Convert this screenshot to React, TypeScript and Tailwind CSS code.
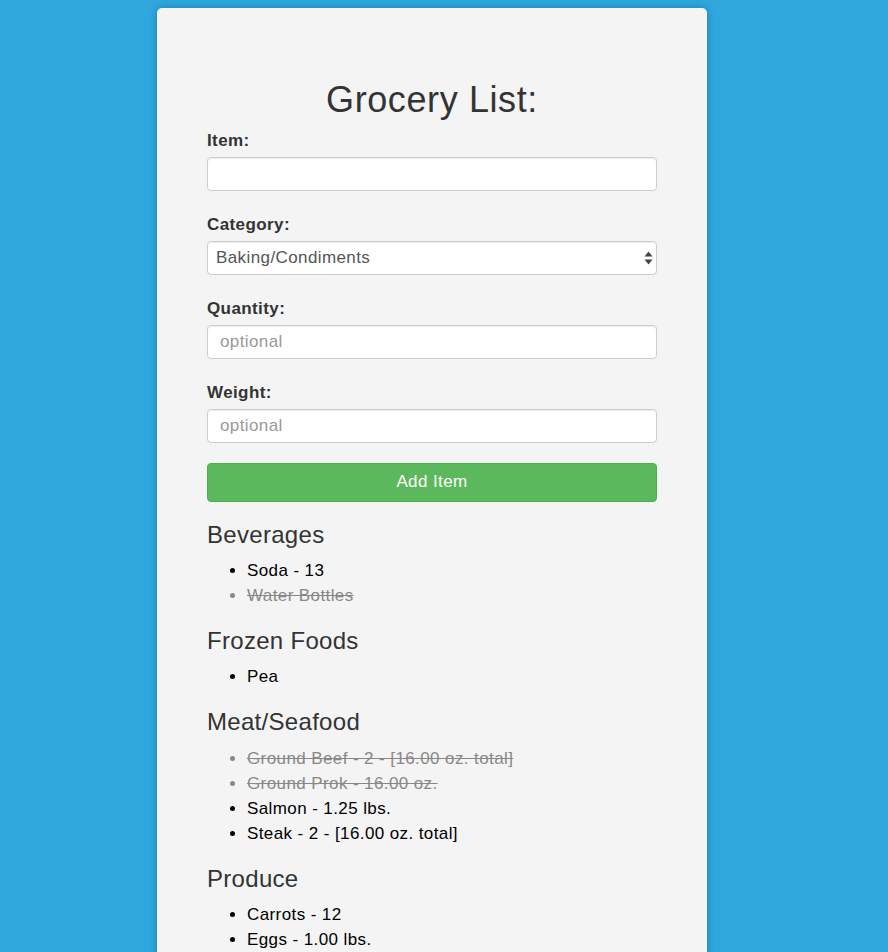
import React from "react";

type Item = { text: string; done?: boolean };

const groups: { name: string; items: Item[] }[] = [
  { name: "Beverages", items: [{ text: "Soda - 13" }, { text: "Water Bottles", done: true }] },
  { name: "Frozen Foods", items: [{ text: "Pea" }] },
  {
    name: "Meat/Seafood",
    items: [
      { text: "Ground Beef - 2 - [16.00 oz. total]", done: true },
      { text: "Ground Prok - 16.00 oz.", done: true },
      { text: "Salmon - 1.25 lbs." },
      { text: "Steak - 2 - [16.00 oz. total]" },
    ],
  },
  { name: "Produce", items: [{ text: "Carrots - 12" }, { text: "Eggs - 1.00 lbs." }] },
];

const inputCls =
  "block w-full h-[34px] px-3 bg-white border border-[#ccc] rounded-[4px] text-[17px] tracking-[0.4px] text-[#555] placeholder:text-[#999] shadow-[inset_0_1px_1px_rgba(0,0,0,0.075)] outline-none";

const labelCls = "block font-bold text-[17px] tracking-[0.4px] leading-[22px] mb-[5px] text-[#333]";

function Field({ label, children }: { label: string; children: React.ReactNode }) {
  return (
    <div className="mb-[23px]">
      <label className={labelCls}>{label}</label>
      {children}
    </div>
  );
}

export default function App() {
  return (
    <div
      className="min-h-screen bg-[#2fa8de] pt-2 pb-10"
      style={{ fontFamily: '"Liberation Sans", Arial, sans-serif' }}
    >
      <div className="ml-[157px] w-[550px] bg-[#f4f4f4] rounded-[5px] shadow-[0_0_8px_rgba(0,0,0,0.25)] px-[50px] pt-[72px] pb-[50px]">
        <h1 className="text-center text-[36px] tracking-[0.6px] leading-[1.1] text-[#333] mb-[10px]">
          Grocery List:
        </h1>

        <Field label="Item:">
          <input className={inputCls} />
        </Field>

        <Field label="Category:">
          <div className="relative">
            <select className={inputCls + " appearance-none pl-[8px]"} defaultValue="Baking/Condiments">
              <option>Baking/Condiments</option>
              <option>Beverages</option>
              <option>Frozen Foods</option>
              <option>Meat/Seafood</option>
              <option>Produce</option>
            </select>
            <svg
              className="absolute right-[4px] top-[10px] pointer-events-none"
              width="9"
              height="14"
              viewBox="0 0 9 14"
            >
              <path d="M4.5 0.5 L8.5 5.5 L0.5 5.5 Z" fill="#444" />
              <path d="M4.5 13.5 L8.5 8.5 L0.5 8.5 Z" fill="#444" />
            </svg>
          </div>
        </Field>

        <Field label="Quantity:">
          <input className={inputCls} placeholder="optional" />
        </Field>

        <div className="mb-[20px]">
          <label className={labelCls}>Weight:</label>
          <input className={inputCls} placeholder="optional" />
        </div>

        <button className="block w-full h-[39px] bg-[#5cb85c] border border-[#4cae4c] rounded-[4px] text-white text-[17px] tracking-[0.4px]">
          Add Item
        </button>

        {groups.map((g) => (
          <div key={g.name}>
            <h3 className="mt-[20px] mb-[10px] text-[24px] tracking-[0.3px] leading-[1.1] text-[#333]">
              {g.name}
            </h3>
            <ul className="list-disc pl-[40px] mb-[10px]">
              {g.items.map((it) => (
                <li
                  key={it.text}
                  className={
                    it.done
                      ? "text-[17px] tracking-[0.4px] leading-[25px] text-[#888] line-through"
                      : "text-[17px] tracking-[0.4px] leading-[25px] text-black"
                  }
                >
                  {it.text}
                </li>
              ))}
            </ul>
          </div>
        ))}
      </div>
    </div>
  );
}
